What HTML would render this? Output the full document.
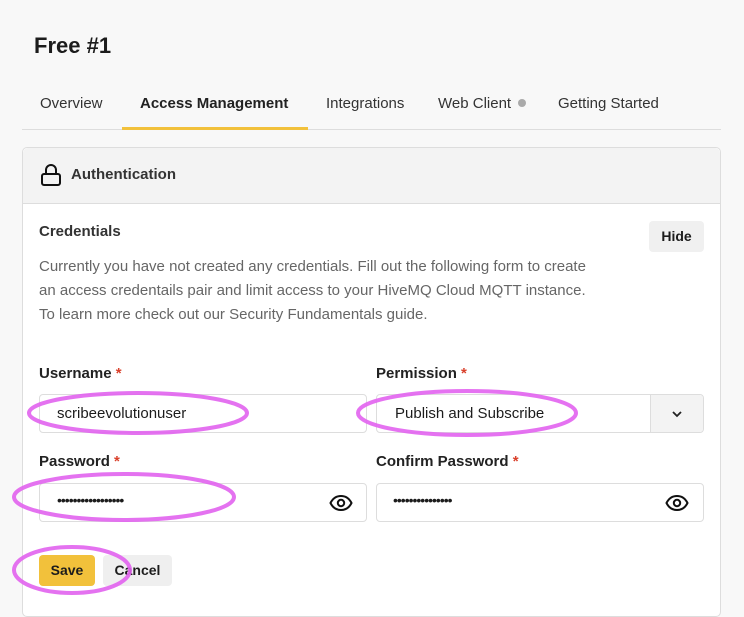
<!DOCTYPE html>
<html><head><meta charset="utf-8"><style>
*{box-sizing:border-box;margin:0;padding:0}
body{width:744px;height:606px;background:#f8f8f8;font-family:"Liberation Sans",sans-serif;color:#1c1c1c;position:relative;overflow:hidden}
.a{position:absolute;white-space:nowrap}
.tab{position:absolute;top:95px;font-size:15px;color:#333}
.inp{position:absolute;background:#fff;border:1px solid #ddd;border-radius:4px;height:39px}
.lbl{position:absolute;font-size:15px;font-weight:bold;color:#222}
.lbl span{color:#d9402b}
</style></head><body>
<div class="a" style="left:34px;top:33px;font-size:22px;font-weight:bold">Free #1</div>
<div class="tab" style="left:40px">Overview</div>
<div class="tab" style="left:140px;font-weight:bold;color:#222">Access Management</div>
<div class="tab" style="left:326px">Integrations</div>
<div class="tab" style="left:438px">Web Client <span style="display:inline-block;width:8px;height:8px;border-radius:50%;background:#aaa;margin-left:3px;vertical-align:1px"></span></div>
<div class="tab" style="left:558px">Getting Started</div>
<div class="a" style="left:22px;top:129px;width:699px;height:1px;background:#ddd"></div>
<div class="a" style="left:122px;top:127px;width:186px;height:3px;background:#f2c13b"></div>
<div class="a" style="left:22px;top:147px;width:699px;height:470px;background:#fff;border:1px solid #ddd;border-radius:5px"></div>
<div class="a" style="left:23px;top:148px;width:697px;height:56px;background:#f3f3f3;border-bottom:1px solid #ddd;border-radius:5px 5px 0 0"></div>
<svg class="a" style="left:39px;top:163px" width="24" height="24" viewBox="0 0 24 24"><path d="M7 11V7a5 5 0 0 1 10 0v4" fill="none" stroke="#111" stroke-width="2"/><rect x="3" y="11" width="18" height="11" rx="2" fill="none" stroke="#111" stroke-width="2"/></svg>
<div class="a" style="left:71px;top:166px;font-size:15px;font-weight:bold;color:#333">Authentication</div>
<div class="a" style="left:39px;top:223px;font-size:15px;font-weight:bold;color:#333">Credentials</div>
<div class="a" style="left:649px;top:221px;width:55px;height:31px;background:#f0f0f0;border-radius:4px;font-size:14px;font-weight:bold;text-align:center;line-height:31px">Hide</div>
<div class="a" style="left:39px;top:255px;font-size:15px;line-height:24px;color:#666">Currently you have not created any credentials. Fill out the following form to create<br>an access credentails pair and limit access to your HiveMQ Cloud MQTT instance.<br>To learn more check out our Security Fundamentals guide.</div>
<div class="lbl" style="left:39px;top:365px">Username <span>*</span></div>
<div class="lbl" style="left:376px;top:365px">Permission <span>*</span></div>
<div class="lbl" style="left:39px;top:453px">Password <span>*</span></div>
<div class="lbl" style="left:376px;top:453px">Confirm Password <span>*</span></div>
<div class="inp" style="left:39px;top:394px;width:328px"><div class="a" style="left:17px;top:10px;font-size:15px">scribeevolutionuser</div></div>
<div class="inp" style="left:376px;top:394px;width:328px;overflow:hidden"><div class="a" style="left:18px;top:10px;font-size:15px">Publish and Subscribe</div><div class="a" style="left:273px;top:0;width:54px;height:39px;background:#f3f3f3;border-left:1px solid #ddd"></div><svg class="a" style="left:294px;top:14px" width="12" height="10" viewBox="0 0 12 10"><path d="M2 3l4 4 4-4" fill="none" stroke="#222" stroke-width="1.8"/></svg></div>
<div class="inp" style="left:39px;top:483px;width:328px"><div class="a" style="left:17px;top:8px;font-size:14px;letter-spacing:-1px">•••••••••••••••••</div>
<svg class="a" style="left:289px;top:9px" width="24" height="20" viewBox="0 0 24 20"><path d="M1.5 10C4 5 8 3 12 3s8 2 10.5 7C20 15 16 17 12 17S4 15 1.5 10z" fill="none" stroke="#111" stroke-width="2"/><circle cx="12" cy="10" r="3.2" fill="none" stroke="#111" stroke-width="2"/></svg></div>
<div class="inp" style="left:376px;top:483px;width:328px"><div class="a" style="left:16px;top:8px;font-size:14px;letter-spacing:-1px">•••••••••••••••</div>
<svg class="a" style="left:288px;top:9px" width="24" height="20" viewBox="0 0 24 20"><path d="M1.5 10C4 5 8 3 12 3s8 2 10.5 7C20 15 16 17 12 17S4 15 1.5 10z" fill="none" stroke="#111" stroke-width="2"/><circle cx="12" cy="10" r="3.2" fill="none" stroke="#111" stroke-width="2"/></svg></div>
<div class="a" style="left:39px;top:555px;width:56px;height:31px;background:#f2c13b;border-radius:4px;font-size:14px;font-weight:bold;text-align:center;line-height:31px">Save</div>
<div class="a" style="left:103px;top:555px;width:69px;height:31px;background:#efefef;border-radius:4px;font-size:14px;font-weight:bold;text-align:center;line-height:31px">Cancel</div>
<svg class="a" style="left:0;top:0" width="744" height="606"><g fill="none" stroke="#e263ef" stroke-width="4" opacity="0.9">
<ellipse cx="138" cy="413" rx="109" ry="20"/>
<ellipse cx="467" cy="413" rx="109" ry="22"/>
<ellipse cx="124" cy="497" rx="110" ry="23"/>
<ellipse cx="72" cy="570" rx="58" ry="23"/>
</g></svg>
</body></html>
